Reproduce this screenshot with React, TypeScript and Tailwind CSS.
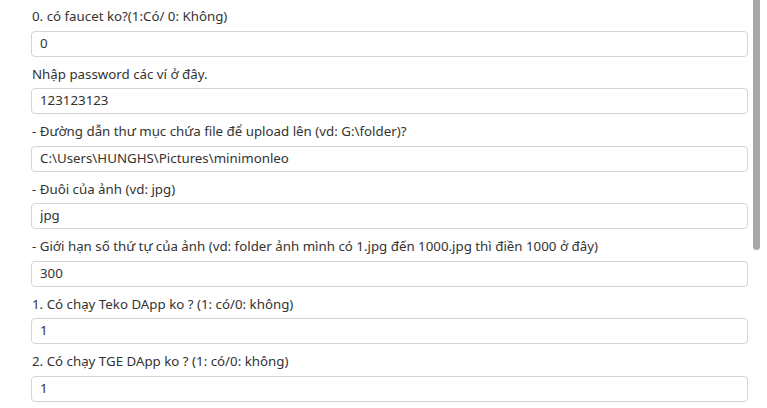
import React from "react";

const fields: { label: string; value: string }[] = [
  { label: "0. có faucet ko?(1:Có/ 0: Không)", value: "0" },
  { label: "Nhập password các ví ở đây.", value: "123123123" },
  { label: "- Đường dẫn thư mục chứa file để upload lên (vd: G:\\folder)?", value: "C:\\Users\\HUNGHS\\Pictures\\minimonleo" },
  { label: "- Đuôi của ảnh (vd: jpg)", value: "jpg" },
  {
    label: "- Giới hạn số thứ tự của ảnh (vd: folder ảnh mình có 1.jpg đến 1000.jpg thì điền 1000 ở đây)",
    value: "300",
  },
  { label: "1. Có chạy Teko DApp ko ? (1: có/0: không)", value: "1" },
  { label: "2. Có chạy TGE DApp ko ? (1: có/0: không)", value: "1" },
];

export default function App() {
  return (
    <div className="relative h-[408px] w-[767px] overflow-hidden bg-white font-['Noto_Sans',sans-serif] text-[13.3px] text-[#333333]">
      <div className="flex w-[748px] flex-col gap-[7px] pl-[31px] pt-[6px]">
        {fields.map((f) => (
          <div key={f.label} className="flex flex-col gap-[3.5px]">
            <label className="block pl-px leading-[21px] whitespace-nowrap">{f.label}</label>
            <input
              readOnly
              value={f.value}
              className="box-border h-[26px] w-full rounded-[4px] border border-[#d4d4d4] bg-white px-2 pb-[2px] leading-[20px] text-[#333333] outline-none"
            />
          </div>
        ))}
      </div>
      <div className="absolute right-[7px] top-0 h-[250px] w-[7px] rounded-b-full bg-[#a8a8a8]" />
    </div>
  );
}
